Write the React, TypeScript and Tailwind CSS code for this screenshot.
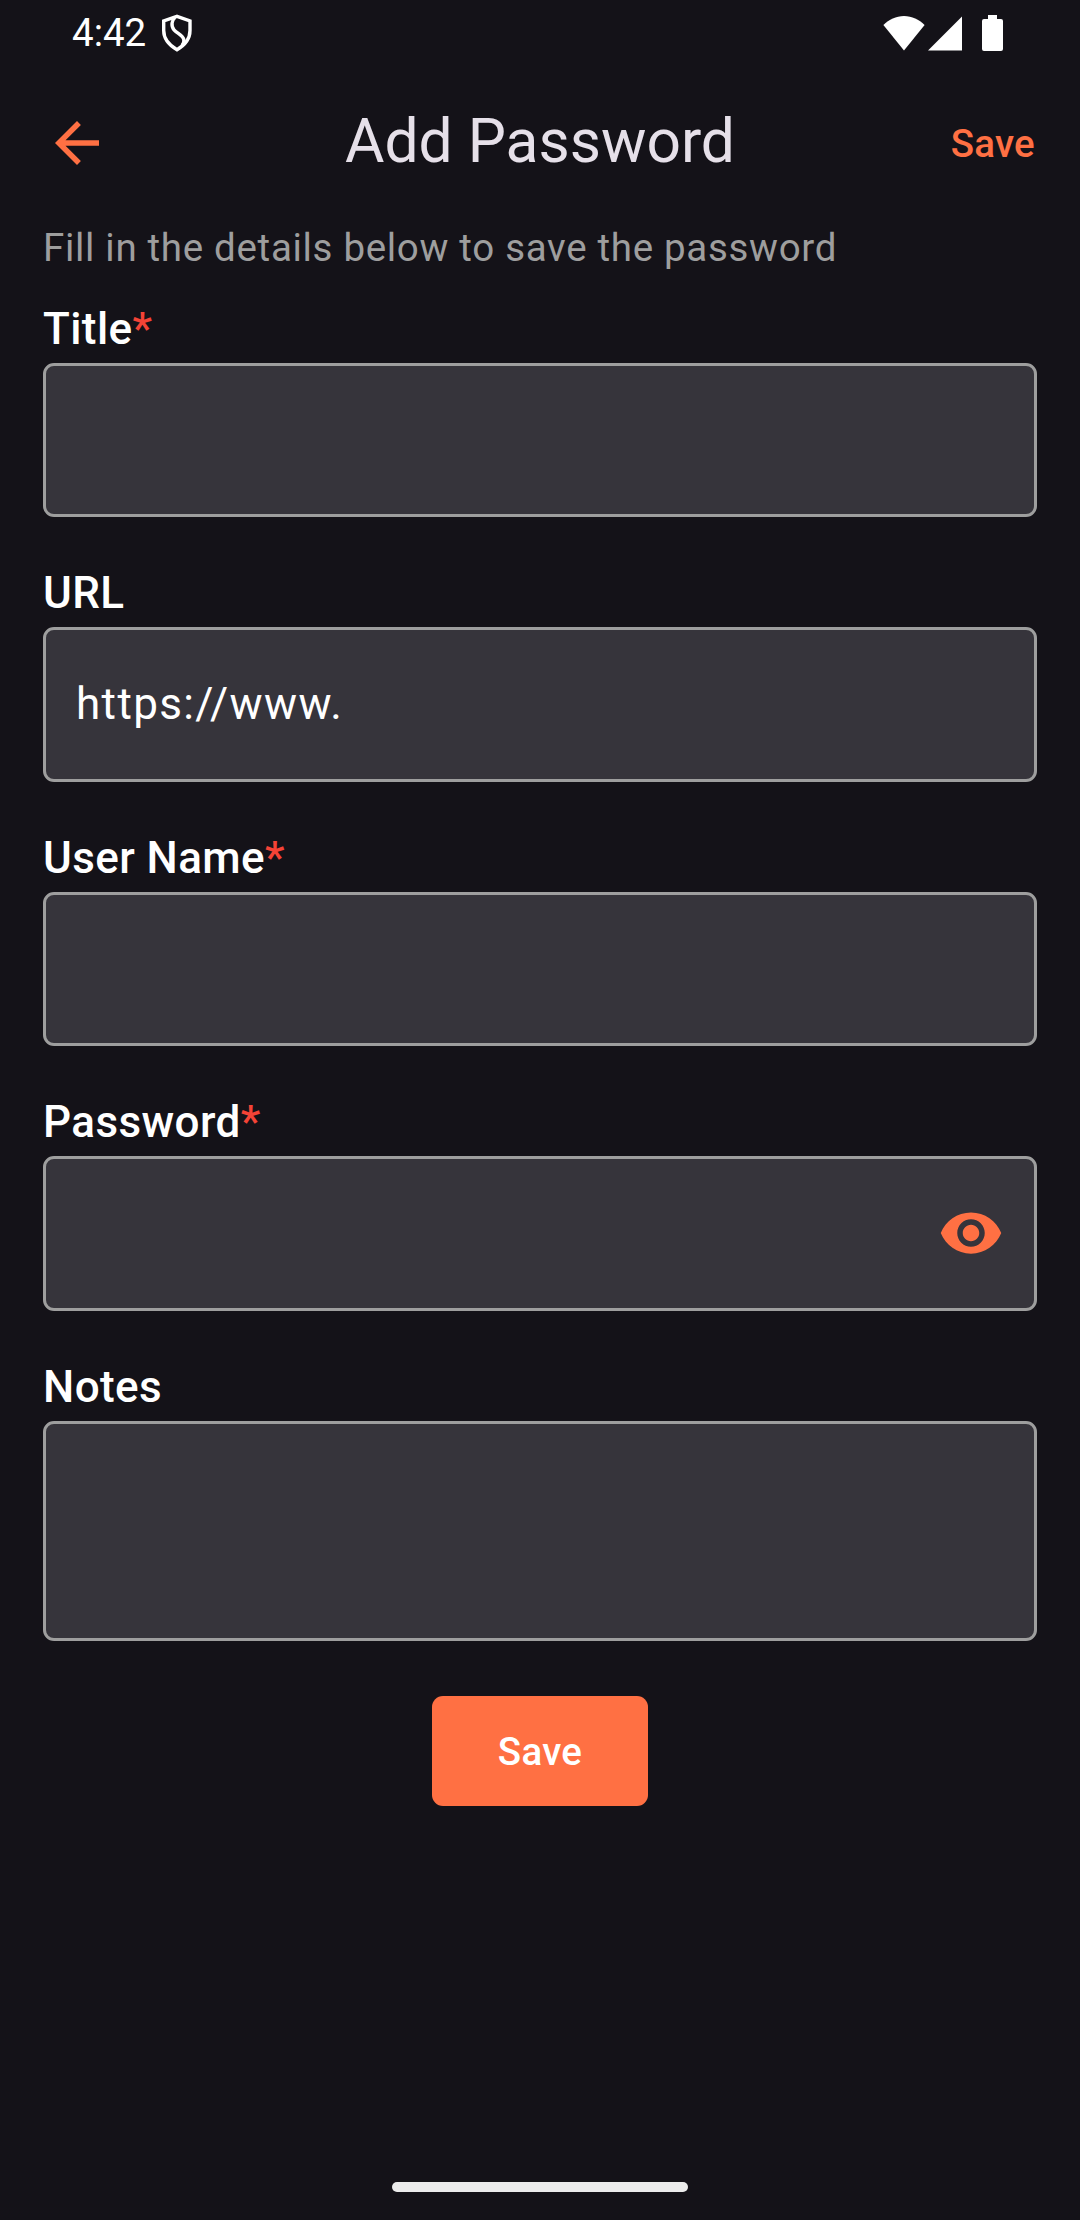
import React from "react";

const text = "font-['Roboto',sans-serif]";

function ShieldIcon() {
  return (
    <svg width="32" height="38" viewBox="0 0 32 38" fill="none" stroke="#fff" strokeWidth="3.4">
      <path d="M16 2.300 29 6.900V16.500c0 8.700-5.200 14.700-13 19.200C8.200 31.200 2.700 25.200 2.700 16.500V6.900Z" />
      <path strokeWidth="3.400" d="M14 3.500C10.800 6 9.700 12 13 15.800c3.200 3.700 8.500 5.200 9.800 9.700 .5 2-.3 4-1.800 6" />
    </svg>
  );
}

function StatusBar() {
  return (
    <div className="flex h-[66px] items-center justify-between pr-[77px] pl-[72px]">
      <div className="flex items-center gap-[15px]">
        <span className="text-[38.5px] leading-[66px]">4:42</span>
        <ShieldIcon />
      </div>
      <div className="flex items-center">
        <svg className="mr-[3px]" width="42" height="36" viewBox="0 0 42 36" fill="#fff">
          <path d="M21 35.500.400 10C6 4.500 13 1 21 1s15 3.500 20.600 9Z" />
        </svg>
        <svg width="34" height="36" viewBox="0 0 34 36" fill="#fff">
          <path d="M34 1.500v34H0Z" />
        </svg>
        <svg className="ml-5" width="21" height="38" viewBox="0 0 21 38" fill="#fff">
          <path d="M6 1h9v4h4a2 2 0 0 1 2 2v28a2 2 0 0 1-2 2H2a2 2 0 0 1-2-2V7a2 2 0 0 1 2-2h4Z" />
        </svg>
      </div>
    </div>
  );
}

function AppBar() {
  return (
    <header className="grid h-[154px] grid-cols-[1fr_auto_1fr] items-center px-11">
      <button aria-label="Back" className="justify-self-start">
        <svg width="66" height="66" viewBox="0 0 24 24" fill="#FF7043">
          <path d="M20 11H7.830l5.590-5.590L12 4l-8 8 8 8 1.410-1.410L7.830 13H20v-2z" />
        </svg>
      </button>
      <h1 className="pb-[3px] text-[60.5px] leading-[72px] text-[#E6E0E9]">Add Password</h1>
      <button className="justify-self-end pt-px pr-px text-[38.5px] leading-[56px] font-medium tracking-[0.275px] text-[#FF7043]">
        Save
      </button>
    </header>
  );
}

type FieldProps = {
  label: string;
  required?: boolean;
  value?: string;
  multiline?: boolean;
  trailing?: React.ReactNode;
};

function Field({ label, required, value, multiline, trailing }: FieldProps) {
  return (
    <label className="block">
      <span className="block h-[68px] text-[44px] leading-[68px] font-medium tracking-[0.4125px]">
        {label}
        {required && <span className="text-[#F44336]">*</span>}
      </span>
      <span
        className={`flex items-center rounded-[11px] border-3 border-[#9E9E9E] bg-[#36343B] pr-[30px] pl-[30px] ${
          multiline ? "h-[220.400px]" : "h-[154.400px]"
        }`}
      >
        {multiline ? (
          <textarea className="h-full w-full resize-none py-11 text-[44px] outline-none" />
        ) : (
          <input
            className="h-full min-w-0 flex-1 pb-0.5 text-[44px] tracking-[1.375px] outline-none"
            defaultValue={value}
          />
        )}
        {trailing}
      </span>
    </label>
  );
}

function EyeIcon() {
  return (
    <svg width="66" height="66" viewBox="0 0 24 24" fill="#FF7043">
      <path d="M12 4.500C7 4.500 2.730 7.610 1 12c1.730 4.390 6 7.500 11 7.500s9.270-3.110 11-7.500c-1.730-4.390-6-7.500-11-7.500zM12 17c-2.760 0-5-2.240-5-5s2.240-5 5-5 5 2.240 5 5-2.240 5-5 5zm0-8c-1.660 0-3 1.340-3 3s1.340 3 3 3 3-1.340 3-3-1.340-3-3-3z" />
    </svg>
  );
}

export default function App() {
  return (
    <div className={`flex h-[2220px] w-[1080px] flex-col bg-[#141218] text-white ${text}`}>
      <StatusBar />
      <AppBar />
      <main className="flex flex-1 flex-col px-[43px]">
        <p className="h-[75px] text-[38.5px] leading-[56px] tracking-[0.6875px] text-[#9E9E9E]">
          Fill in the details below to save the password
        </p>
        <div className="flex flex-col gap-[42px]">
          <Field label="Title" required />
          <Field label="URL" value="https://www." />
          <Field label="User Name" required />
          <Field label="Password" required trailing={<EyeIcon />} />
          <Field label="Notes" multiline />
        </div>
        <button className="mt-[55px] h-[110px] w-[216px] self-center rounded-[11px] bg-[#FF7043] pt-0.5 text-[38.5px] leading-[56px] font-medium tracking-[0.275px]">
          Save
        </button>
      </main>
      <div className="mb-7 h-[10px] w-[296px] self-center rounded-full bg-[#ECECEC]" />
    </div>
  );
}
